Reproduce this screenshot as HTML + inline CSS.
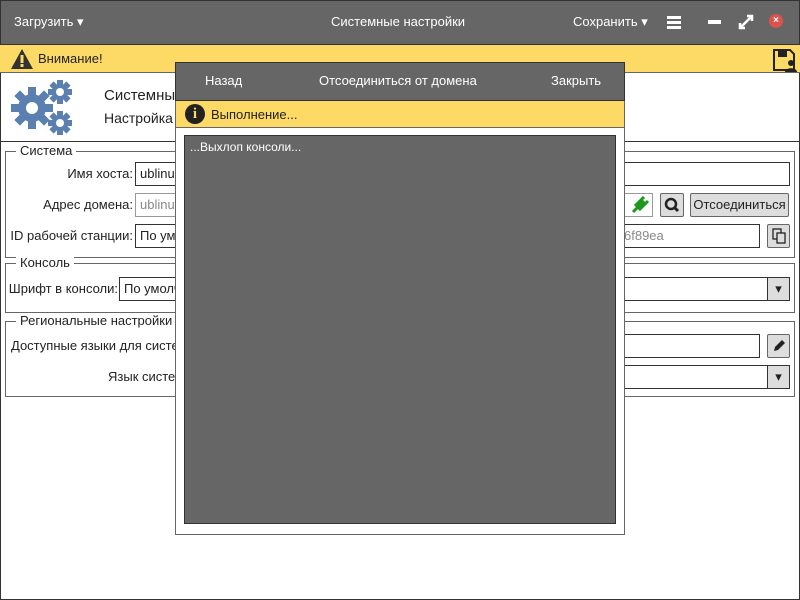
<!DOCTYPE html>
<html><head><meta charset="utf-8"><style>
*{box-sizing:border-box;margin:0;padding:0}
body{width:800px;height:600px;position:relative;background:#fff;font-family:"Liberation Sans","DejaVu Sans",sans-serif;font-size:13px;color:#222;overflow:hidden}
.a{position:absolute}
.w{color:#fff}
.inp{position:absolute;border:1px solid #333;background:#fff;height:24px;padding:3px 4px;white-space:nowrap;overflow:hidden}
.btn{position:absolute;border:1px solid #666;background:#ddd;border-radius:2px;height:24px;text-align:center;line-height:22px}
.fs{position:absolute;border:1px solid #666;left:5px;width:790px}
.lg{position:absolute;top:-8px;left:10px;background:#fff;padding:0 4px;line-height:14px}
.lbl{position:absolute;text-align:right;line-height:24px}
</style></head><body>
<div class="a" style="left:0;top:0;width:800px;height:600px;border:1px solid #333"></div>
<div class="a" style="left:0;top:0;width:800px;height:45px;background:#666;border:1px solid #333"></div>
<div class="a w" style="left:14px;top:14px">Загрузить ▾</div>
<div class="a w" style="left:331px;top:14px">Системные настройки</div>
<div class="a w" style="left:573px;top:14px">Сохранить ▾</div>
<div class="a" style="left:667px;top:16px;width:14px;height:3px;background:#fff;box-shadow:0 5px 0 #fff,0 10px 0 #fff"></div>
<div class="a" style="left:708px;top:20px;width:13px;height:4px;background:#fff"></div>
<svg class="a" style="left:738px;top:14px" width="16" height="16"><path d="M2 14L14 2M9 2h5v5M2 9v5h5" stroke="#fff" stroke-width="2.5" fill="none"/></svg>
<div class="a" style="left:769px;top:14px;width:14px;height:14px;border-radius:50%;background:#d9534f;color:#fff;font-size:10px;text-align:center;line-height:14px;font-weight:bold">×</div>
<div class="a" style="left:0;top:45px;width:800px;height:28px;background:#fdd966;border-bottom:1px solid #666"></div>
<svg class="a" style="left:10px;top:48px" width="24" height="22"><path d="M12 1L23 21H1Z" fill="#333"/><rect x="10.5" y="7" width="3" height="8" fill="#fdd966"/><rect x="10.5" y="16" width="3" height="3" fill="#fdd966"/></svg>
<div class="a" style="left:38px;top:51px">Внимание!</div>
<svg class="a" style="left:772px;top:48px" width="26" height="24"><path d="M2 2h16l4 4v16H2Z" fill="none" stroke="#222" stroke-width="2"/><rect x="6" y="3" width="9" height="6" fill="#222"/><circle cx="19" cy="15" r="3" fill="#222"/><path d="M13 24c0-5 12-5 12 0Z" fill="#222"/></svg>
<svg class="a" style="left:9px;top:78px" width="66" height="60" fill="#5b7fae"><g transform="translate(23,30)"><circle r="14"/><g id="t"><rect x="-4" y="-21" width="8" height="42"/><rect x="-21" y="-4" width="42" height="8"/></g><use href="#t" transform="rotate(45)"/><circle r="6" fill="#fff"/></g><g transform="translate(51,14)"><circle r="8"/><rect x="-3" y="-12" width="6" height="24"/><rect x="-12" y="-3" width="24" height="6"/><rect x="-3" y="-12" width="6" height="24" transform="rotate(45)"/><rect x="-12" y="-3" width="24" height="6" transform="rotate(45)"/><circle r="4" fill="#fff"/></g><g transform="translate(51,45)"><circle r="8"/><rect x="-3" y="-12" width="6" height="24"/><rect x="-12" y="-3" width="24" height="6"/><rect x="-3" y="-12" width="6" height="24" transform="rotate(45)"/><rect x="-12" y="-3" width="24" height="6" transform="rotate(45)"/><circle r="4" fill="#fff"/></g></svg>
<div class="a" style="left:104px;top:87px;font-size:15px">Системные настройки</div>
<div class="a" style="left:104px;top:110px;font-size:14px">Настройка системы</div>
<div class="a" style="left:0;top:141px;width:800px;border-top:1px solid #333"></div>

<div class="fs" style="top:151px;height:107px"><div class="lg">Система</div></div>
<div class="lbl" style="left:10px;top:162px;width:123px">Имя хоста:</div>
<div class="inp" style="left:135px;top:162px;width:655px">ublinux</div>
<div class="lbl" style="left:10px;top:193px;width:123px">Адрес домена:</div>
<div class="inp" style="left:135px;top:193px;width:518px;border-color:#999;color:#888">ublinux</div>
<svg class="a" style="left:631px;top:196px" width="18" height="18"><path d="M2 16l4-4M5 9l4 4 5-5-4-4z M11 3l2-2M15 7l2-2" stroke="#1a9a1a" stroke-width="3" fill="#1a9a1a"/></svg>
<div class="btn" style="left:660px;top:193px;width:24px"><svg width="16" height="16" style="margin-top:3px"><circle cx="7" cy="7" r="5" stroke="#222" stroke-width="2.5" fill="none"/><path d="M10 10l4 4" stroke="#222" stroke-width="3"/></svg></div>
<div class="btn" style="left:690px;top:193px;width:99px">Отсоединиться</div>
<div class="lbl" style="left:10px;top:224px;width:123px">ID рабочей станции:</div>
<div class="inp" style="left:135px;top:224px;width:625px"><span>По умолчанию</span><span class="a" style="left:488px;top:3px;color:#888">6f89ea</span></div>
<div class="btn" style="left:767px;top:224px;width:23px"><svg width="14" height="16" style="margin-top:3px"><rect x="1" y="1" width="8" height="10" fill="none" stroke="#222" stroke-width="1.3"/><rect x="5" y="5" width="8" height="10" fill="#ddd" stroke="#222" stroke-width="1.3"/></svg></div>

<div class="fs" style="top:263px;height:50px"><div class="lg">Консоль</div></div>
<div class="lbl" style="left:8px;top:277px;width:110px">Шрифт в консоли:</div>
<div class="inp" style="left:119px;top:277px;width:671px">По умолчанию</div>
<div class="btn" style="left:767px;top:277px;width:23px;border-color:#333;border-radius:0">▾</div>

<div class="fs" style="top:321px;height:76px"><div class="lg">Региональные настройки</div></div>
<div class="lbl" style="left:11px;top:334px">Доступные языки для системы:</div>
<div class="inp" style="left:200px;top:334px;width:560px"></div>
<div class="btn" style="left:767px;top:334px;width:23px"><svg width="14" height="14" style="margin-top:4px"><path d="M2 12l1-4 7-7 3 3-7 7z" fill="#222"/></svg></div>
<div class="lbl" style="left:108px;top:365px">Язык системы:</div>
<div class="inp" style="left:200px;top:365px;width:590px"></div>
<div class="btn" style="left:767px;top:365px;width:23px;border-color:#333;border-radius:0">▾</div>

<div class="a" style="left:175px;top:62px;width:450px;height:473px;background:#fff;border:1px solid #666"></div>
<div class="a" style="left:175px;top:62px;width:450px;height:39px;background:#666;border:1px solid #333"></div>
<div class="a w" style="left:205px;top:73px">Назад</div>
<div class="a w" style="left:319px;top:73px">Отсоединиться от домена</div>
<div class="a w" style="left:551px;top:73px">Закрыть</div>
<div class="a" style="left:176px;top:101px;width:448px;height:27px;background:#fdd966;border-bottom:1px solid #666"></div>
<div class="a" style="left:185px;top:104px;width:20px;height:20px;border-radius:50%;background:#222;color:#fdd966;font-weight:bold;text-align:center;line-height:20px;font-family:'Liberation Serif',serif;font-size:15px">i</div>
<div class="a" style="left:211px;top:107px">Выполнение...</div>
<div class="a" style="left:184px;top:135px;width:432px;height:389px;background:#666;border:1px solid #333"></div>
<div class="a w" style="left:190px;top:140px;font-size:12px">...Выхлоп консоли...</div>
</body></html>
